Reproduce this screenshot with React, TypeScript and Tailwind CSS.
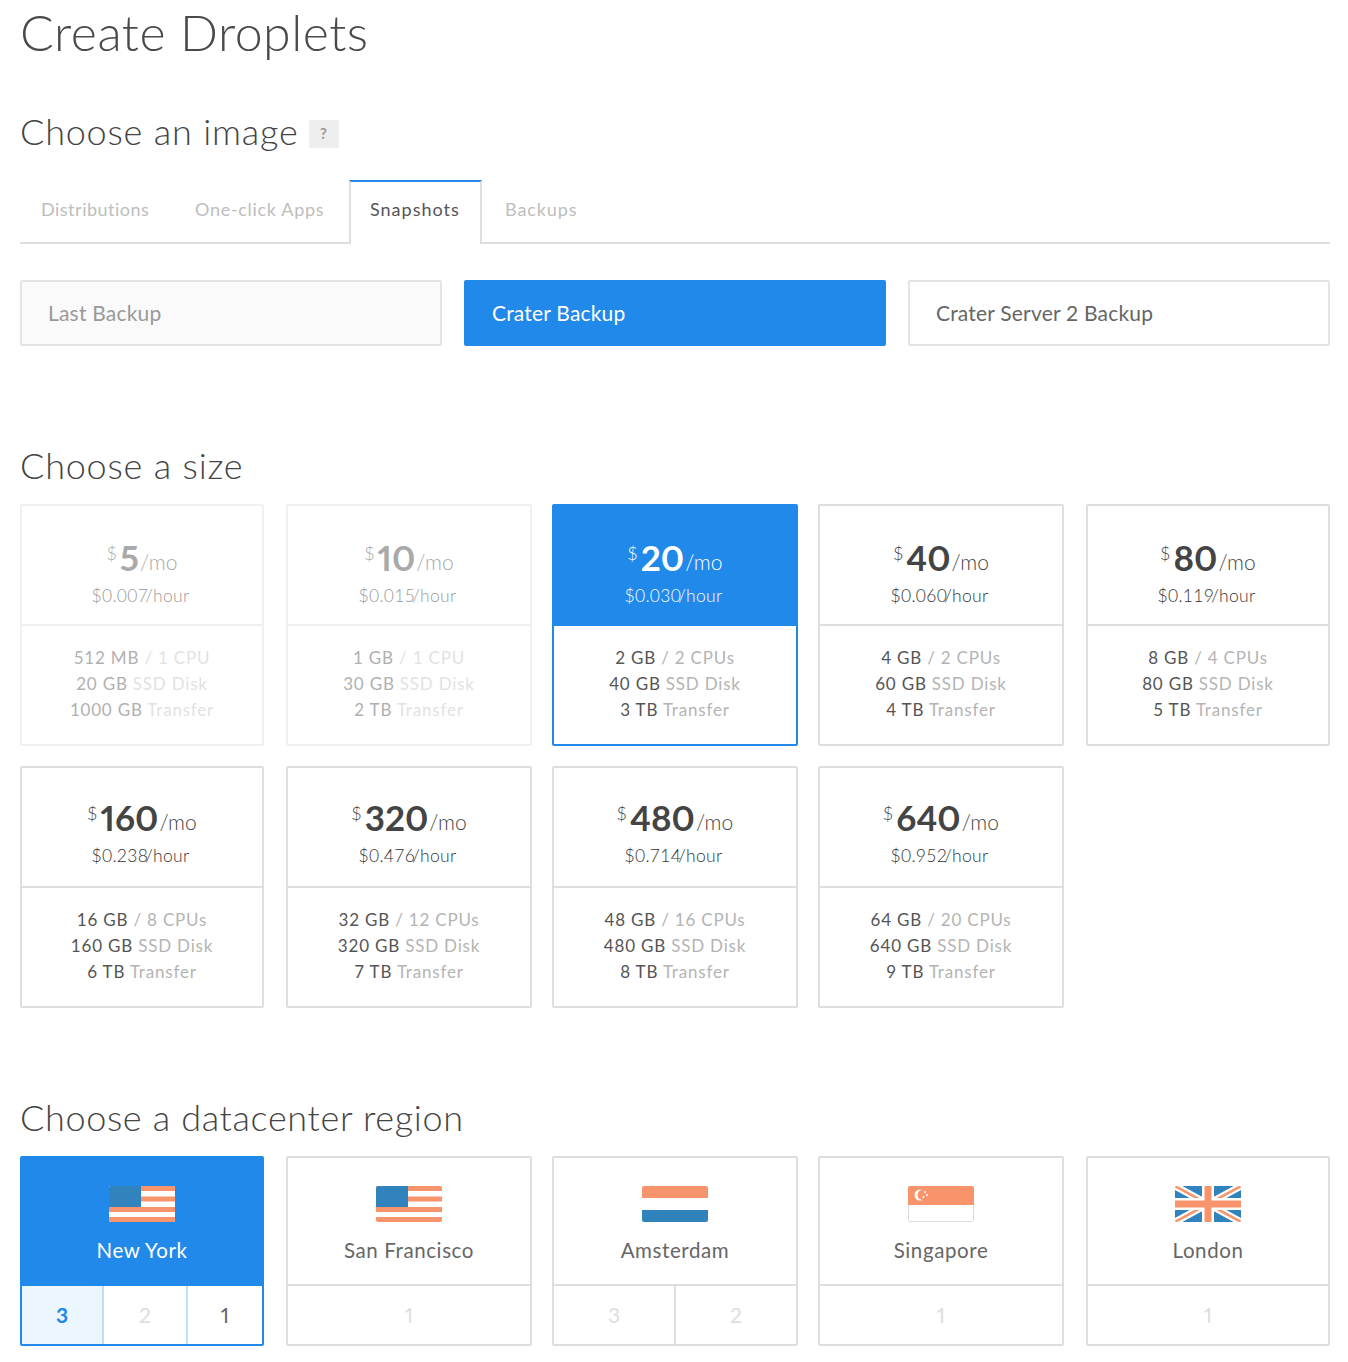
import type { ReactNode } from "react";

const sizes = [
  { mo: "5", hour: "$0.007", mem: "512 MB", cpu: "1 CPU", disk: "20 GB", transfer: "1000 GB", off: true },
  { mo: "10", hour: "$0.015", mem: "1 GB", cpu: "1 CPU", disk: "30 GB", transfer: "2 TB", off: true },
  { mo: "20", hour: "$0.030", mem: "2 GB", cpu: "2 CPUs", disk: "40 GB", transfer: "3 TB", active: true },
  { mo: "40", hour: "$0.060", mem: "4 GB", cpu: "2 CPUs", disk: "60 GB", transfer: "4 TB" },
  { mo: "80", hour: "$0.119", mem: "8 GB", cpu: "4 CPUs", disk: "80 GB", transfer: "5 TB" },
  { mo: "160", hour: "$0.238", mem: "16 GB", cpu: "8 CPUs", disk: "160 GB", transfer: "6 TB" },
  { mo: "320", hour: "$0.476", mem: "32 GB", cpu: "12 CPUs", disk: "320 GB", transfer: "7 TB" },
  { mo: "480", hour: "$0.714", mem: "48 GB", cpu: "16 CPUs", disk: "480 GB", transfer: "8 TB" },
  { mo: "640", hour: "$0.952", mem: "64 GB", cpu: "20 CPUs", disk: "640 GB", transfer: "9 TB" },
];

// the five columns are not quite equal in the design
const cardWidths = ["w-[244px]", "w-[246px]", "w-[246px]", "w-[246px]", "w-[244px]"];

function FlagUS() {
  return (
    <svg width="66" height="36" viewBox="0 0 66 36" className="rounded-[2px]">
      <rect width="66" height="36" fill="#fff" />
      <rect y="0" width="66" height="5" fill="#f8946c" />
      <rect y="10.5" width="66" height="5" fill="#f8946c" />
      <rect y="21" width="66" height="5" fill="#f8946c" />
      <rect y="31" width="66" height="5" fill="#f8946c" />
      <rect width="32" height="21" fill="#3183bd" />
    </svg>
  );
}

function FlagNL() {
  return (
    <svg width="66" height="36" viewBox="0 0 66 36" className="rounded-[2px]">
      <rect width="66" height="12" fill="#f8946c" />
      <rect y="12" width="66" height="12" fill="#fff" />
      <rect y="24" width="66" height="12" fill="#3183bd" />
    </svg>
  );
}

function FlagSG() {
  return (
    <svg width="66" height="36" viewBox="0 0 66 36" className="rounded-[2px]">
      <rect x="0.5" y="18" width="65" height="17.5" rx="1" fill="#fff" stroke="#dcdcdc" />
      <rect width="66" height="19" fill="#f8946c" />
      <circle cx="12" cy="9" r="5.5" fill="#fff" />
      <circle cx="14.5" cy="9" r="5" fill="#f8946c" />
      <circle cx="17" cy="6" r="1" fill="#fff" />
      <circle cx="19" cy="9" r="1" fill="#fff" />
      <circle cx="15.5" cy="11" r="1" fill="#fff" />
    </svg>
  );
}

function FlagUK() {
  return (
    <svg width="66" height="36" viewBox="0 0 66 36" className="rounded-[2px]">
      <rect width="66" height="36" fill="#3183bd" />
      <path d="M0 0L66 36M66 0L0 36" stroke="#fff" strokeWidth="7" />
      <path d="M0 0L66 36M66 0L0 36" stroke="#f8946c" strokeWidth="2.5" />
      <path d="M33 0V36M0 18H66" stroke="#fff" strokeWidth="12" />
      <path d="M33 0V36M0 18H66" stroke="#f8946c" strokeWidth="7" />
    </svg>
  );
}

const regions: { name: string; flag: ReactNode; nums: string[]; active?: boolean }[] = [
  { name: "New York", flag: <FlagUS />, nums: ["3", "2", "1"], active: true },
  { name: "San Francisco", flag: <FlagUS />, nums: ["1"] },
  { name: "Amsterdam", flag: <FlagNL />, nums: ["3", "2"] },
  { name: "Singapore", flag: <FlagSG />, nums: ["1"] },
  { name: "London", flag: <FlagUK />, nums: ["1"] },
];

function SizeCard({ s, width, lower }: { s: (typeof sizes)[number]; width: string; lower: boolean }) {
  const top = s.active ? "text-white" : s.off ? "text-[#a9a9a9]" : "text-[#444]";
  const strong = s.off ? "text-[#b0b0b0]" : "text-[#555]";
  const muted = s.off ? "text-[#e2e2e2]" : "text-[#b4b4b4]";
  const border = s.active ? "border-[#2089ea]" : s.off ? "border-[#f0f0f0]" : "border-[#dedede]";
  return (
    <div className={`h-[242px] border-2 rounded-[2px] flex flex-col ${width} ${border}`}>
      <div className={`h-[120px] flex flex-col items-center border-b-2 ${s.active ? "bg-[#2089ea] border-[#2089ea]" : s.off ? "border-[#f0f0f0]" : "border-[#dedede]"} ${top}`}>
        <div className={`flex items-baseline h-[44px] ${lower ? "mt-[26px]" : "mt-[28px]"}`}>
          <span className="text-[18px] font-light relative top-[-10px] mr-[3px]">$</span>
          <span className="text-[35px] font-bold leading-[44px] proportional-nums relative top-[1px]">{s.mo}</span>
          <span className="text-[21px] font-light ml-[1px] tracking-[0.1px]">/mo</span>
        </div>
        <div className={`text-[17.5px] leading-[24px] mt-[6px] mr-[3px] font-light tracking-[0.3px] ${s.active ? "text-white" : s.off ? "text-[#999]" : "text-[#333]"}`}>
          {s.hour}
          <span className="ml-[-3px]">/hour</span>
        </div>
      </div>
      <div className="flex-1 pt-[19px] text-center text-[17px] leading-[26px] tracking-[0.8px]">
        <div className={strong}>
          {s.mem} <span className={muted}>/ {s.cpu}</span>
        </div>
        <div className={strong}>
          {s.disk} <span className={muted}>SSD Disk</span>
        </div>
        <div className={strong}>
          {s.transfer} <span className={muted}>Transfer</span>
        </div>
      </div>
    </div>
  );
}

function RegionCard({ r, width }: { r: (typeof regions)[number]; width: string }) {
  return (
    <div className={`h-[190px] border-2 rounded-[2px] flex flex-col ${width} ${r.active ? "border-[#2089ea]" : "border-[#dedede]"}`}>
      <div className={`h-[126px] flex flex-col items-center pt-[28px] ${r.active ? "bg-[#2089ea] text-white" : "text-[#666]"}`}>
        {r.flag}
        <div className="text-[20.5px] leading-[28px] mt-[14px] tracking-[0.6px]">{r.name}</div>
      </div>
      <div className={`flex-1 flex border-t-2 ${r.active ? "border-[#2089ea]" : "border-[#dedede]"}`}>
        {r.nums.map((n, i) => {
          let cls = "flex-1 text-[#dedede]";
          if (r.active && i === 0) cls = "w-[80px] flex-none bg-[#ecf6fe] text-[#2089ea] font-bold";
          if (r.active && i === 1) cls = "w-[84px] flex-none text-[#dedede]";
          if (r.active && i === 2) cls = "flex-1 text-[#666]";
          const sep = i > 0 ? (r.active ? "border-l-2 border-[#bfdff8]" : "border-l-2 border-[#dedede]") : "";
          return (
            <div key={i} className={`flex items-center justify-center text-[21px] proportional-nums ${cls} ${sep}`}>
              {n}
            </div>
          );
        })}
      </div>
    </div>
  );
}

export default function App() {
  return (
    <div className="w-[1348px] h-[1362px] overflow-hidden bg-white pl-[20px] pr-[18px] font-['Lato','Open_Sans',sans-serif]">
      <h1 className="text-[50px] font-light leading-[60px] mt-[2px] text-[#4a4a4a] tracking-[0.5px]">Create Droplets</h1>

      <div className="flex items-center mt-[39px] h-[60px]">
        <h2 className="text-[36px] font-light text-[#444] tracking-[0.8px]">Choose an image</h2>
        <span className="ml-[10px] mt-[5px] w-[30px] h-[28px] bg-[#eeeeee] rounded-[2px] flex items-center justify-center text-[15px] font-bold text-[#999]">?</span>
      </div>

      <div className="flex mt-[19px] h-[64px] border-b-2 border-[#dedede] text-[18px]">
        <div className="pl-[21px] pt-[16px] w-[153px] text-[#bdbdbd] tracking-[0.5px]">Distributions</div>
        <div className="pl-[22px] pt-[16px] w-[176px] text-[#bdbdbd] tracking-[0.7px]">One-click Apps</div>
        <div className="w-[133px] h-[64px] border-x-2 border-t-2 border-x-[#dedede] border-t-[#2089ea] bg-white pl-[19px] pt-[14px] text-[#555] tracking-[1px]">Snapshots</div>
        <div className="pl-[23px] pt-[16px] text-[#bdbdbd] tracking-[0.9px]">Backups</div>
      </div>

      <div className="grid grid-cols-3 gap-[22px] mt-[36px] text-[21px] tracking-[0.2px]">
        <div className="h-[66px] border-2 border-[#e4e4e4] rounded-[2px] bg-[#fafafa] flex items-center pl-[26px] text-[#999]">Last Backup</div>
        <div className="h-[66px] rounded-[2px] bg-[#2089ea] flex items-center pl-[28px] text-white">Crater Backup</div>
        <div className="h-[66px] border-2 border-[#e4e4e4] rounded-[2px] flex items-center pl-[26px] text-[#666]">Crater Server 2 Backup</div>
      </div>

      <h2 className="text-[36px] font-light leading-[44px] text-[#444] mt-[97px] tracking-[0.8px]">Choose a size</h2>
      <div className="grid grid-cols-[266px_266px_266px_268px_244px] gap-y-[20px] mt-[17px]">
        {sizes.map((s, i) => (
          <SizeCard key={s.mo} s={s} width={cardWidths[i % 5]} lower={i >= 5} />
        ))}
      </div>

      <h2 className="text-[36px] font-light leading-[44px] text-[#444] mt-[87px] tracking-[0.65px]">Choose a datacenter region</h2>
      <div className="grid grid-cols-[266px_266px_266px_268px_244px] mt-[17px]">
        {regions.map((r, i) => (
          <RegionCard key={r.name} r={r} width={cardWidths[i]} />
        ))}
      </div>
    </div>
  );
}
